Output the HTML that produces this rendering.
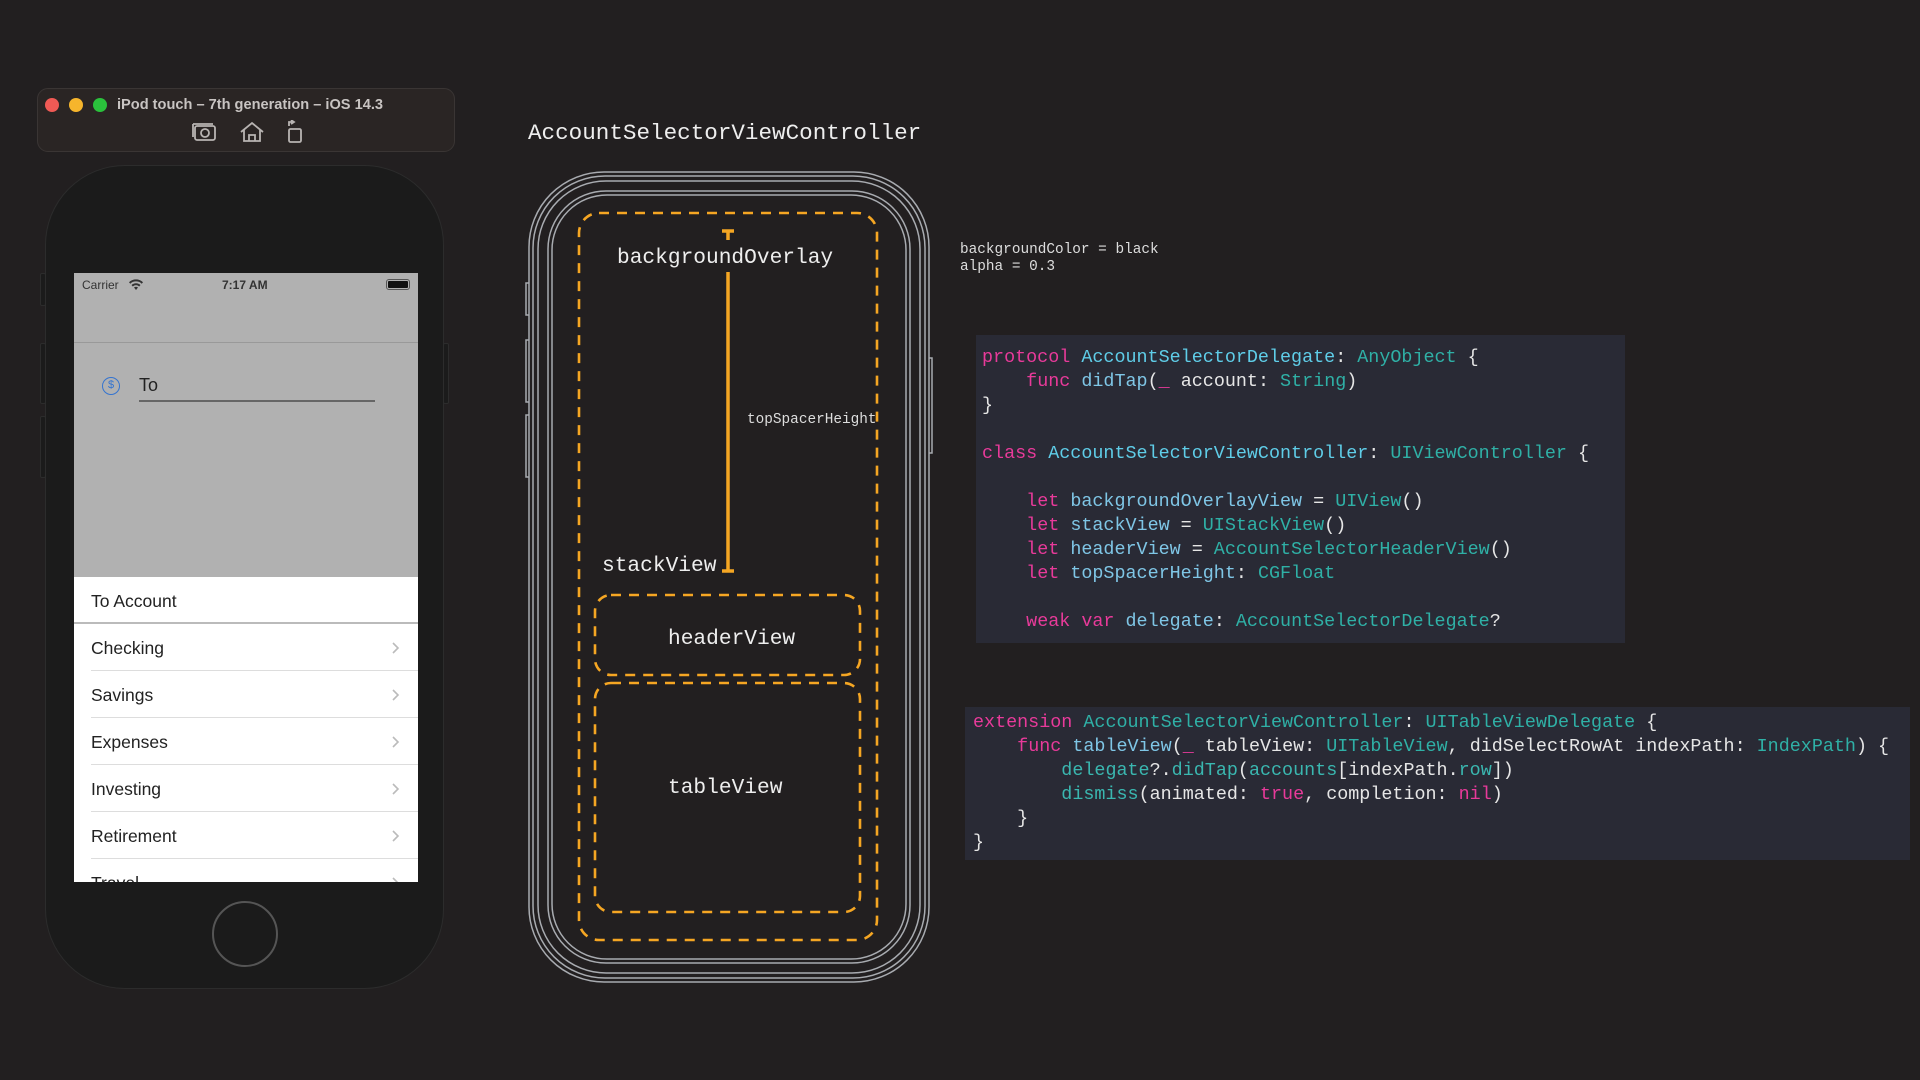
<!DOCTYPE html>
<html><head><meta charset="utf-8"><style>
*{margin:0;padding:0;box-sizing:border-box}
body{width:1920px;height:1080px;background:#221f20;position:relative;overflow:hidden;font-family:"Liberation Sans",sans-serif}
.abs{position:absolute}
.mono{font-family:"Liberation Mono",monospace;white-space:pre}
.code{position:absolute;background:#292a35;font-family:"Liberation Mono",monospace;font-size:18.4px;line-height:24px;white-space:pre;color:#e6e6e6}
.k{color:#e83a9a}.d{color:#5fcde8}.t{color:#2fb0a6}.v{color:#7fc6e6}.f{color:#3ab7b0}
.row{position:absolute;left:0;width:344px;height:47px;background:#fff;font-size:17.5px;color:#222;padding-left:17px;line-height:49px}
.row .sep{position:absolute;left:17px;right:0;bottom:0;height:1px;background:#ddd}
.row svg{position:absolute;right:18px;top:18px}
</style></head><body>

<div class="abs" style="left:37px;top:88px;width:418px;height:64px;background:#2a2524;border-radius:11px;border:1px solid #3a3534"></div>
<div class="abs" style="left:45px;top:98px;width:14px;height:14px;border-radius:50%;background:#f05a55"></div>
<div class="abs" style="left:69px;top:98px;width:14px;height:14px;border-radius:50%;background:#f6b52c"></div>
<div class="abs" style="left:93px;top:98px;width:14px;height:14px;border-radius:50%;background:#2ac23c"></div>
<div class="abs" style="left:117px;top:97px;font-weight:bold;font-size:14.6px;color:#c8c4c2">iPod touch – 7th generation – iOS 14.3</div>
<svg class="abs" style="left:192px;top:120px" width="120" height="26" viewBox="0 0 120 26" fill="none" stroke="#b8b4b2" stroke-width="1.8">
<rect x="3" y="6" width="20" height="14" rx="2"/><path d="M1 4v13M1 4h20"/><circle cx="13" cy="13" r="4"/>
<path d="M49 12l11-9 11 9M52 10v11h16V10M57 21v-6h6v6"/>
<rect x="97" y="9" width="12" height="13" rx="1.5"/><path d="M97 6V2h5M99 0l3 2-3 2"/>
</svg>

<div class="abs" style="left:45px;top:165px;width:399px;height:824px;background:#1b1b1b;border-radius:80px;border:1.5px solid #2c2c2c"></div>
<div class="abs" style="left:40px;top:273px;width:6px;height:33px;background:#1b1b1b;border:1px solid #2c2c2c;border-radius:2px"></div>
<div class="abs" style="left:40px;top:343px;width:6px;height:61px;background:#1b1b1b;border:1px solid #2c2c2c;border-radius:2px"></div>
<div class="abs" style="left:40px;top:416px;width:6px;height:62px;background:#1b1b1b;border:1px solid #2c2c2c;border-radius:2px"></div>
<div class="abs" style="left:443px;top:343px;width:6px;height:61px;background:#1b1b1b;border:1px solid #2c2c2c;border-radius:2px"></div>

<div class="abs" style="left:74px;top:273px;width:344px;height:609px;background:#b1b1b1;overflow:hidden">
  <div class="abs" style="left:0;top:69px;width:344px;height:1px;background:#999"></div>
  <div class="abs" style="left:8px;top:5px;font-size:12px;color:#333">Carrier</div>
  <svg class="abs" style="left:54px;top:6px" width="16" height="12" viewBox="0 0 16 12"><path d="M8 11l2-2.5a3 3 0 0 0-4 0z M3.5 6a6.5 6.5 0 0 1 9 0l-1.3 1.5a4.5 4.5 0 0 0-6.4 0z M1 3.2a10 10 0 0 1 14 0L13.7 4.7a8 8 0 0 0-11.4 0z" fill="#333"/></svg>
  <div class="abs" style="left:148px;top:5px;font-size:12px;color:#333;font-weight:bold">7:17 AM</div>
  <div class="abs" style="left:312px;top:6px;width:24px;height:11px;border:1px solid #555;border-radius:3px;padding:1px"><div style="width:100%;height:100%;background:#111;border-radius:1px"></div></div>
  <div class="abs" style="left:28px;top:104px;width:18px;height:18px;border:1.7px solid #3474d0;border-radius:50%;color:#3474d0;font-size:11px;text-align:center;line-height:15px">$</div>
  <div class="abs" style="left:65px;top:102px;font-size:18px;color:#222">To</div>
  <div class="abs" style="left:65px;top:127px;width:236px;height:2px;background:#666"></div>
  <div class="row" style="top:304px">To Account<div class="abs" style="left:0;right:0;bottom:0;height:2px;background:#bbb"></div></div>
  <div class="row" style="top:351px">Checking<svg width="8" height="12" viewBox="0 0 8 12"><path d="M1 1l5 5-5 5" stroke="#bbb" stroke-width="1.6" fill="none"/></svg><div class="sep"></div></div>
  <div class="row" style="top:398px">Savings<svg width="8" height="12" viewBox="0 0 8 12"><path d="M1 1l5 5-5 5" stroke="#bbb" stroke-width="1.6" fill="none"/></svg><div class="sep"></div></div>
  <div class="row" style="top:445px">Expenses<svg width="8" height="12" viewBox="0 0 8 12"><path d="M1 1l5 5-5 5" stroke="#bbb" stroke-width="1.6" fill="none"/></svg><div class="sep"></div></div>
  <div class="row" style="top:492px">Investing<svg width="8" height="12" viewBox="0 0 8 12"><path d="M1 1l5 5-5 5" stroke="#bbb" stroke-width="1.6" fill="none"/></svg><div class="sep"></div></div>
  <div class="row" style="top:539px">Retirement<svg width="8" height="12" viewBox="0 0 8 12"><path d="M1 1l5 5-5 5" stroke="#bbb" stroke-width="1.6" fill="none"/></svg><div class="sep"></div></div>
  <div class="row" style="top:586px">Travel<svg width="8" height="12" viewBox="0 0 8 12"><path d="M1 1l5 5-5 5" stroke="#bbb" stroke-width="1.6" fill="none"/></svg></div>
</div>
<div class="abs" style="left:212px;top:901px;width:66px;height:66px;border-radius:50%;border:2px solid #555"></div>

<div class="abs mono" style="left:528px;top:120px;font-size:22.6px;color:#eee">AccountSelectorViewController</div>
<svg class="abs" style="left:0;top:0" width="1920" height="1080" viewBox="0 0 1920 1080" fill="none">
 <g stroke="#a8abb0" stroke-width="1.5">
  <rect x="529" y="172" width="400" height="810" rx="75"/>
  <rect x="533" y="176" width="392" height="802" rx="72"/>
  <rect x="538" y="181" width="382" height="792" rx="68"/>
  <rect x="548" y="191" width="362" height="772" rx="58"/>
  <rect x="552" y="195" width="354" height="764" rx="55"/>
  <path d="M529 283h-3v32h3 M529 340h-3v62h3 M529 415h-3v62h3 M929 358h3v95h-3"/>
 </g>
 <g stroke="#f5a623" stroke-width="2.6" stroke-dasharray="10 8">
  <rect x="579" y="213" width="298" height="727" rx="20"/>
  <rect x="595" y="595" width="265" height="80" rx="16"/>
  <rect x="595" y="683" width="265" height="229" rx="16"/>
 </g>
 <g stroke="#f5a623" stroke-width="3.5">
  <path d="M728 272v300M722 571h12M722 231h12M728 231v9"/>
 </g>
</svg>
<div class="abs mono" style="left:617px;top:246px;font-size:21.2px;color:#eee">backgroundOverlay</div>
<div class="abs mono" style="left:602px;top:554px;font-size:21.2px;color:#eee">stackView</div>
<div class="abs mono" style="left:668px;top:627px;font-size:21.2px;color:#eee">headerView</div>
<div class="abs mono" style="left:668px;top:776px;font-size:21.2px;color:#eee">tableView</div>
<div class="abs mono" style="left:747px;top:412px;font-size:14.4px;color:#ddd">topSpacerHeight</div>
<div class="abs mono" style="left:960px;top:242px;font-size:14.4px;line-height:17px;color:#ddd">backgroundColor = black
alpha = 0.3</div>

<div class="code" style="left:976px;top:335px;width:649px;height:308px;padding:11px 0 0 6px"><span class="k">protocol</span> <span class="d">AccountSelectorDelegate</span>: <span class="t">AnyObject</span> {
    <span class="k">func</span> <span class="v">didTap</span>(<span class="k">_</span> account: <span class="t">String</span>)
}

<span class="k">class</span> <span class="d">AccountSelectorViewController</span>: <span class="t">UIViewController</span> {

    <span class="k">let</span> <span class="v">backgroundOverlayView</span> = <span class="t">UIView</span>()
    <span class="k">let</span> <span class="v">stackView</span> = <span class="t">UIStackView</span>()
    <span class="k">let</span> <span class="v">headerView</span> = <span class="t">AccountSelectorHeaderView</span>()
    <span class="k">let</span> <span class="v">topSpacerHeight</span>: <span class="t">CGFloat</span>

    <span class="k">weak</span> <span class="k">var</span> <span class="v">delegate</span>: <span class="t">AccountSelectorDelegate</span>?</div>

<div class="code" style="left:965px;top:707px;width:945px;height:153px;padding:4px 0 0 8px"><span class="k">extension</span> <span class="t">AccountSelectorViewController</span>: <span class="t">UITableViewDelegate</span> {
    <span class="k">func</span> <span class="v">tableView</span>(<span class="k">_</span> tableView: <span class="t">UITableView</span>, didSelectRowAt indexPath: <span class="t">IndexPath</span>) {
        <span class="f">delegate</span>?.<span class="f">didTap</span>(<span class="f">accounts</span>[indexPath.<span class="f">row</span>])
        <span class="f">dismiss</span>(animated: <span class="k">true</span>, completion: <span class="k">nil</span>)
    }
}</div>
</body></html>
